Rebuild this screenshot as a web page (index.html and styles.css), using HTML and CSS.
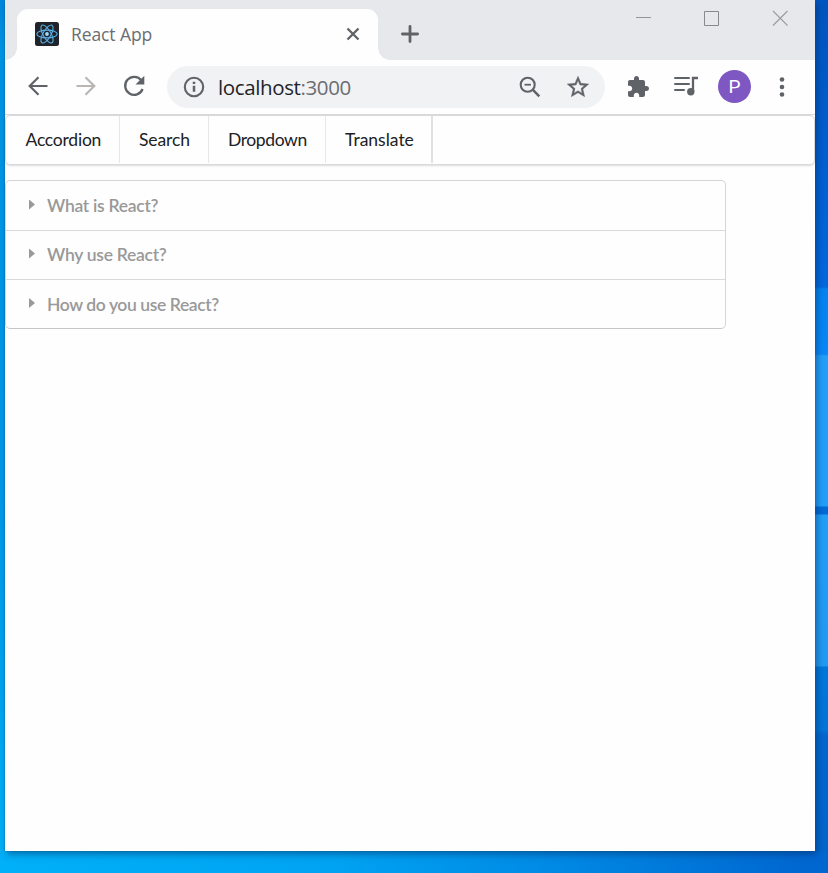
FILE: index.html
```html
<!DOCTYPE html>
<html lang="en">
<head>
<meta charset="utf-8">
<title>React App</title>
<link rel="stylesheet" href="styles.css">
</head>
<body>
<div class="window">
  <header class="tabstrip">
    <div class="tab">
      <svg class="favicon" width="24" height="24" viewBox="0 0 24 24" fill="none" stroke="#5bb0e4" stroke-width="1.1">
        <rect width="24" height="24" rx="2.5" fill="#20232a" stroke="none"/>
        <ellipse cx="12" cy="12" rx="10.2" ry="3.9"/>
        <ellipse cx="12" cy="12" rx="10.2" ry="3.9" transform="rotate(60 12 12)"/>
        <ellipse cx="12" cy="12" rx="10.2" ry="3.9" transform="rotate(120 12 12)"/>
        <circle cx="12" cy="12" r="1.9" fill="#9bdcff" stroke="none"/>
      </svg>
      <span class="tab-title">React App</span>
      <svg class="tab-close" width="14" height="14" viewBox="0 0 14 14" stroke="#5f6368" stroke-width="2.3"><path d="M1.500 1.500l11 11M12.500 1.500l-11 11"/></svg>
    </div>
    <svg class="new-tab" width="18" height="18" viewBox="0 0 18 18" stroke="#5f6368" stroke-width="2.8" stroke-linecap="round"><path d="M9 1.400v15.200M1.400 9h15.200"/></svg>
    <div class="controls">
      <svg width="16" height="16" viewBox="0 0 16 16" stroke="#929496"><path d="M0 7.500h15"/></svg>
      <svg width="16" height="16" viewBox="0 0 16 16" stroke="#88898c" fill="none"><path d="M.5 1.500h14v14H.5z"/></svg>
      <svg width="16" height="16" viewBox="0 0 16 16" stroke="#9b9c9f" stroke-width="1.1"><path d="M1 1l14.500 14.500M15.500 1L1 15.500"/></svg>
    </div>
  </header>
  <div class="toolbar">
    <svg class="nav" width="20" height="20" viewBox="0 0 20 20" stroke="#5f6368" stroke-width="2.200" fill="none"><path d="M19.500 10H1.800M10.500 1.200L1.700 10l8.800 8.800"/></svg>
    <svg class="nav" width="20" height="20" viewBox="0 0 20 20" stroke="#bab6b4" stroke-width="2.200" fill="none"><path d="M.5 10h17.700M9.500 1.200l8.800 8.800-8.800 8.800"/></svg>
    <svg class="nav reload" width="22" height="22" viewBox="0 0 22 22" fill="none"><path d="M18.300 5.300A9 9 0 1 0 19.600 14" stroke="#5f6368" stroke-width="2.300"/><path d="M21.300.8v8.700h-8.800z" fill="#5f6368"/></svg>
    <div class="address">
      <svg class="info" width="22" height="22" viewBox="0 0 22 22" fill="none" stroke="#5f6368" stroke-width="2.100"><circle cx="11" cy="11" r="9.200"/><path d="M11 9.800v6M11 5.800v2.200" stroke-width="2.500"/></svg>
      <span class="url">localhost<span class="port">:3000</span></span>
      <svg class="zoom" width="22" height="22" viewBox="0 0 22 22" fill="none" stroke="#5f6368" stroke-width="2.100"><circle cx="8.700" cy="8.700" r="7"/><path d="M13.700 13.700l6.600 6.600" stroke-width="2.500"/><path d="M5.500 8.700h6.400" stroke-width="1.800"/></svg>
      <svg class="star" width="26" height="26" viewBox="0 0 24 24" fill="#5f6368" stroke="#5f6368" stroke-width=".35"><path d="M22 9.240l-7.190-.62L12 2 9.190 8.630 2 9.240l5.460 4.730L5.820 21 12 17.270 18.180 21l-1.630-7.030L22 9.240zM12 15.400l-3.760 2.270 1-4.280-3.320-2.880 4.380-.38L12 6.100l1.710 4.040 4.380.38-3.320 2.880 1 4.280L12 15.400z"/></svg>
    </div>
    <svg class="puzzle" width="24" height="24" viewBox="0 0 24 24" fill="#5f6368"><path d="M20.500 11H19V7c0-1.100-.9-2-2-2h-4V3.500C13 2.120 11.880 1 10.500 1S8 2.120 8 3.500V5H4c-1.100 0-1.990.9-1.990 2v3.800H3.500c1.490 0 2.700 1.210 2.700 2.700s-1.210 2.700-2.700 2.700H2V20c0 1.100.9 2 2 2h3.800v-1.500c0-1.490 1.210-2.700 2.700-2.700 1.490 0 2.700 1.210 2.700 2.700V22H17c1.100 0 2-.9 2-2v-4h1.500c1.380 0 2.500-1.120 2.500-2.500S21.880 11 20.500 11z"/></svg>
    <svg class="media" width="25" height="20" viewBox="0 0 25 20" fill="none" stroke="#5f6368" stroke-width="2"><path d="M1 2h14M1 8h14M1 14h9" stroke-linecap="round"/><path d="M24 2h-5v14" stroke-width="2.300"/><circle cx="16.800" cy="15.800" r="3.700" fill="#5f6368" stroke="none"/></svg>
    <div class="avatar">P</div>
    <svg class="more" width="6" height="20" viewBox="0 0 6 20" fill="#5f6368"><circle cx="3" cy="2.500" r="2.300"/><circle cx="3" cy="10" r="2.300"/><circle cx="3" cy="17.500" r="2.300"/></svg>
  </div>
  <main class="page">
    <nav class="menu">
      <a class="item accordion-link">Accordion</a>
      <a class="item search-link">Search</a>
      <a class="item dropdown-link">Dropdown</a>
      <a class="item translate-link">Translate</a>
    </nav>
    <section class="accordion">
      <div class="title"><i class="caret"></i><span>What is React?</span></div>
      <div class="title middle"><i class="caret"></i><span>Why use React?</span></div>
      <div class="title last"><i class="caret"></i><span>How do you use React?</span></div>
    </section>
  </main>
</div>
</body>
</html>
```
FILE: styles.css
```css
* { box-sizing: border-box; }
html, body { margin: 0; height: 100%; }
body {
  height: 873px;
  padding: 0 13px 22px 5px;
  overflow: hidden;
  font-family: Lato, "Liberation Sans", sans-serif;
  background:
    linear-gradient(90deg, #00b0f8 0, #00a3f2 40%, #008be6 65%, #0067d0 97%) 0 851px / 828px 22px no-repeat,
    linear-gradient(#0055c0 0, #0062d6 200px, #0068de 287px, #0583f1 289px, #0788f8 354px, #229ffa 356px, #229ffa 506px, #006bd6 507px, #006bd6 514px, #229ffa 515px, #229af3 666px, #0077dc 667px, #0074d8 730px, #0067d0 735px, #0065cc 851px) 815px 0 / 13px 851px no-repeat,
    linear-gradient(#0087dd 0, #0096e6 50px, #009ae9 500px, #00b0f8 851px) 0 0 / 5px 851px no-repeat;
}
svg { display: block; flex: none; }
.window {
  width: 810px;
  height: 851px;
  background: #fefefe;
  box-shadow: 0 0 1px #234c78, 2px 3px 7px rgba(0, 40, 90, .5);
}
.tabstrip {
  display: flex;
  height: 60px;
  padding: 9px 0 0 12px;
  background: #e7e8ec;
}
.tab {
  position: relative;
  display: flex;
  align-items: center;
  width: 361px;
  padding: 0 18px 2px;
  border-radius: 11px 11px 0 0;
  background: #fefefe;
}
.tab::before, .tab::after {
  content: "";
  position: absolute;
  bottom: 0;
  width: 12px;
  height: 12px;
}
.tab::before { left: -12px; background: radial-gradient(circle at 0 0, transparent 11.5px, #fefefe 12px); }
.tab::after { right: -12px; background: radial-gradient(circle at 100% 0, transparent 11.5px, #fefefe 12px); }
.tab-title {
  margin-left: 12px;
  color: #6b6d72;
  font: 17.5px/24px "Open Sans", sans-serif;
  letter-spacing: -.1px;
}
.tab-close { margin-left: auto; }
.new-tab { margin: 16px 0 0 23px; }
.controls { display: flex; gap: 52px; margin: 1px 27px 0 auto; }
.toolbar {
  display: flex;
  align-items: center;
  height: 54px;
  padding: 0 0 1px 23px;
}
.nav { margin-bottom: 1px; }
.nav + .nav { margin-left: 28px; }
.nav + .reload { margin-left: 27px; }
.address {
  display: flex;
  align-items: center;
  width: 438px;
  height: 42px;
  margin: 1px 0 0 22px;
  padding: 0 14px 0 16px;
  border-radius: 21px;
  background: #f1f2f4;
}
.url {
  margin-left: 13px;
  color: #222327;
  font: 20.5px/28px "Open Sans", sans-serif;
  letter-spacing: -.38px;
}
.port { color: #6b6d72; }
.zoom { margin-left: auto; }
.star { margin-left: 24px; }
.puzzle { margin-left: 21px; }
.media { margin: 0 0 1px 24px; }
.avatar {
  width: 33px;
  height: 33px;
  margin-left: 19px;
  border-radius: 50%;
  background: #7e57c2;
  color: #fff;
  font: 19px/33px Roboto, sans-serif;
  text-align: center;
}
.more { margin-left: 28px; }
.page { border-top: 1px solid #d9dadc; }
.menu {
  display: flex;
  height: 50px;
  border: 1px solid #d9d9db;
  border-radius: 5px;
  box-shadow: 0 1px 2px rgba(34, 36, 38, .15);
}
.item {
  display: flex;
  align-items: center;
  height: 47px;
  padding: 0 0 0 19px;
  border-right: 1px solid #e7e7e8;
  color: #202124;
  font-size: 17.5px;
}
.accordion-link { width: 114px; padding-left: 19.5px; letter-spacing: -.22px; }
.search-link { width: 89px; letter-spacing: -.12px; }
.dropdown-link { width: 117px; letter-spacing: -.4px; }
.translate-link { width: 107px; border-right: 2px solid #e1e1e2; }
.accordion {
  width: 721px;
  height: 149px;
  margin-top: 15px;
  border: 1px solid #d5d5d6;
  border-bottom-color: #c6c6c7;
  border-radius: 5px;
}
.title {
  display: flex;
  align-items: center;
  height: 49px;
  padding-left: 23px;
  color: #999;
  font-size: 17.5px;
  font-weight: 600;
  letter-spacing: -.27px;
}
.title + .title { border-top: 1px solid #d9d9da; }
.title.middle { padding-bottom: 1px; }
.title.last { letter-spacing: -.4px; }
.caret {
  width: 6px;
  height: 10px;
  margin: -2px 12px 0 0;
  background: #999;
  clip-path: polygon(0 0, 100% 50%, 0 100%);
}
```
